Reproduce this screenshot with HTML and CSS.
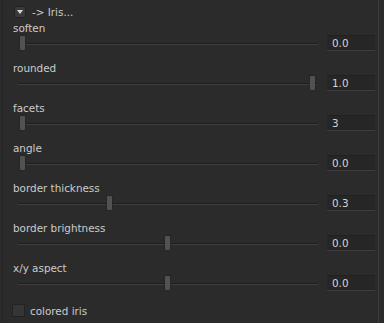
FILE: index.html
```html
<!DOCTYPE html>
<html lang="en">
<head>
    <meta charset="UTF-8">
    <title>Iris</title>
    <link rel="stylesheet" href="styles.css">
</head>
<body>

<div class="panel">
    <div class="header">
        <span class="toggle"><span class="arrow"></span></span>
        <span class="title">-&gt; Iris...</span>
    </div>

    <div class="row">
        <div class="label">soften</div>
        <div class="control">
            <div class="slider"><div class="track"></div><div class="handle" style="left: 0%"></div></div>
            <div class="value">0.0</div>
        </div>
    </div>

    <div class="row">
        <div class="label">rounded</div>
        <div class="control">
            <div class="slider"><div class="track"></div><div class="handle" style="left: 100%"></div></div>
            <div class="value">1.0</div>
        </div>
    </div>

    <div class="row">
        <div class="label">facets</div>
        <div class="control">
            <div class="slider"><div class="track"></div><div class="handle" style="left: 0%"></div></div>
            <div class="value">3</div>
        </div>
    </div>

    <div class="row">
        <div class="label">angle</div>
        <div class="control">
            <div class="slider"><div class="track"></div><div class="handle" style="left: 0%"></div></div>
            <div class="value">0.0</div>
        </div>
    </div>

    <div class="row">
        <div class="label">border thickness</div>
        <div class="control">
            <div class="slider"><div class="track"></div><div class="handle" style="left: 30%"></div></div>
            <div class="value">0.3</div>
        </div>
    </div>

    <div class="row">
        <div class="label">border brightness</div>
        <div class="control">
            <div class="slider"><div class="track"></div><div class="handle" style="left: 50%"></div></div>
            <div class="value">0.0</div>
        </div>
    </div>

    <div class="row">
        <div class="label">x/y aspect</div>
        <div class="control">
            <div class="slider"><div class="track"></div><div class="handle" style="left: 50%"></div></div>
            <div class="value">0.0</div>
        </div>
    </div>

    <div class="check">
        <span class="box"></span>
        <span class="check-label">colored iris</span>
    </div>
</div>

</body>
</html>
```

FILE: styles.css
```css
body {
    margin: 0;
    background-color: #2b2b2b;
    font-family: "DejaVu Sans", Verdana, sans-serif;
    font-size: 10.4px;
    color: #cccccc;
}

.panel {
    width: 377px;
    height: 323px;
    box-sizing: border-box;
    margin-left: 2px;
    border-left: 1px solid #242424;
    border-right: 1px solid #3c3c3c;
    padding: 5px 3px 0 10px;
}

.header {
    display: flex;
    align-items: center;
    gap: 6px;
    height: 13px;
    padding-left: 1px;
}

.toggle {
    width: 12px;
    height: 12px;
    box-sizing: border-box;
    background: #393939;
    border: 1px solid #222;
    display: flex;
    align-items: center;
    justify-content: center;
}

.arrow {
    width: 0;
    height: 0;
    border-left: 3px solid transparent;
    border-right: 3px solid transparent;
    border-top: 4px solid #d8d8d8;
}

.row {
    height: 40px;
}

.label {
    height: 17px;
    line-height: 14px;
    padding-top: 3px;
    box-sizing: border-box;
}

.control {
    display: flex;
    align-items: center;
    gap: 14px;
}

.slider {
    position: relative;
    flex: 1;
    height: 16px;
    margin-left: 10px;
}

.track {
    position: absolute;
    left: -5px;
    right: -5px;
    top: 8px;
    height: 1px;
    background: #1e1e1e;
    border-bottom: 1px solid #3e3e3e;
}

.handle {
    position: absolute;
    top: 0;
    width: 5px;
    height: 14px;
    margin-left: -4px;
    background: #525252;
    border: 1px solid #262626;
    border-radius: 2px;
}

.value {
    width: 48px;
    height: 16px;
    line-height: 15px;
    box-sizing: border-box;
    padding-left: 5px;
    background: #262626;
    border-top: 1px solid #202020;
    border-bottom: 1px solid #3d3d3d;
    color: #d4d4d4;
}

.check {
    display: flex;
    align-items: center;
    gap: 5px;
    margin-left: -1px;
    margin-top: 6px;
}

.box {
    width: 13px;
    height: 13px;
    box-sizing: border-box;
    background: #353535;
    border: 1px solid #222;
}
```
